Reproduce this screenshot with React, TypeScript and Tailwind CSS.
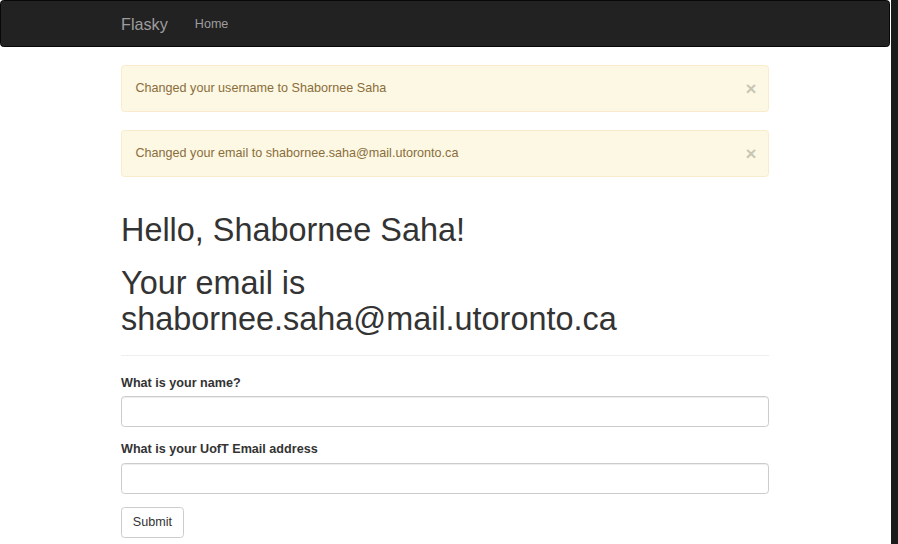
import React from "react";

function Alert({ text }: { text: string }) {
  return (
    <div className="relative mb-[18px] rounded-[3.6px] border border-[#faebcc] bg-[#fcf8e3] py-[13.5px] pl-[13.5px] pr-[31.5px] text-[#8a6d3b]">
      <button
        type="button"
        className="relative top-[1px] right-[-20px] float-right text-[18.9px] font-bold leading-[18px] text-black opacity-20"
      >
        ×
      </button>
      <span>{text}</span>
    </div>
  );
}

export default function App() {
  return (
    <div
      className="flex min-h-[544px] w-[898px] bg-white text-[12.6px] leading-[18px] text-[#333]"
      style={{ fontFamily: '"Liberation Sans", Arial, Helvetica, sans-serif' }}
    >
      <div className="w-[890px] shrink-0">
        <nav className="mb-[18px] h-[46.8px] rounded-[3.6px] border border-[#080808] bg-[#222]">
          <div className="mx-auto flex w-[675px] px-[13.5px]">
            <a className="ml-[-13.5px] block h-[45px] px-[13.5px] py-[13.5px] text-[16.2px] leading-[18px] text-[#9d9d9d]">
              Flasky
            </a>
            <a className="block px-[13.5px] py-[13.5px] leading-[18px] text-[#9d9d9d]">Home</a>
          </div>
        </nav>
        <div className="mx-auto w-[675px] px-[13.5px]">
          <Alert text="Changed your username to Shabornee Saha" />
          <Alert text="Changed your email to shabornee.saha@mail.utoronto.ca" />
          <div className="mt-[36px] mb-[18px] border-b border-[#eee] pb-[8.1px]">
            <h1 className="mb-[9px] text-[32.4px] leading-[1.1] font-normal">Hello, Shabornee Saha!</h1>
            <h1 className="mt-[18px] mb-[9px] text-[32.4px] leading-[1.1] font-normal">
              Your email is shabornee.saha@mail.utoronto.ca
            </h1>
          </div>
          <form>
            <div className="mb-[13.5px]">
              <label className="mb-[4.5px] inline-block font-bold">What is your name?</label>
              <input
                type="text"
                className="block h-[30.6px] w-full rounded-[3.6px] border border-[#ccc] bg-white px-[10.8px] shadow-[inset_0_1px_1px_rgba(0,0,0,0.075)] outline-none"
              />
            </div>
            <div className="mb-[13.5px]">
              <label className="mb-[4.5px] inline-block font-bold">What is your UofT Email address</label>
              <input
                type="text"
                className="block h-[30.6px] w-full rounded-[3.6px] border border-[#ccc] bg-white px-[10.8px] shadow-[inset_0_1px_1px_rgba(0,0,0,0.075)] outline-none"
              />
            </div>
            <button
              type="button"
              className="h-[30.6px] rounded-[3.6px] border border-[#ccc] bg-white px-[10.8px] leading-[18px] text-[#333]"
            >
              Submit
            </button>
          </form>
        </div>
      </div>
      <div className="w-px shrink-0 bg-white" />
      <div className="w-[7px] shrink-0 bg-[#1b1b1b]" />
    </div>
  );
}
